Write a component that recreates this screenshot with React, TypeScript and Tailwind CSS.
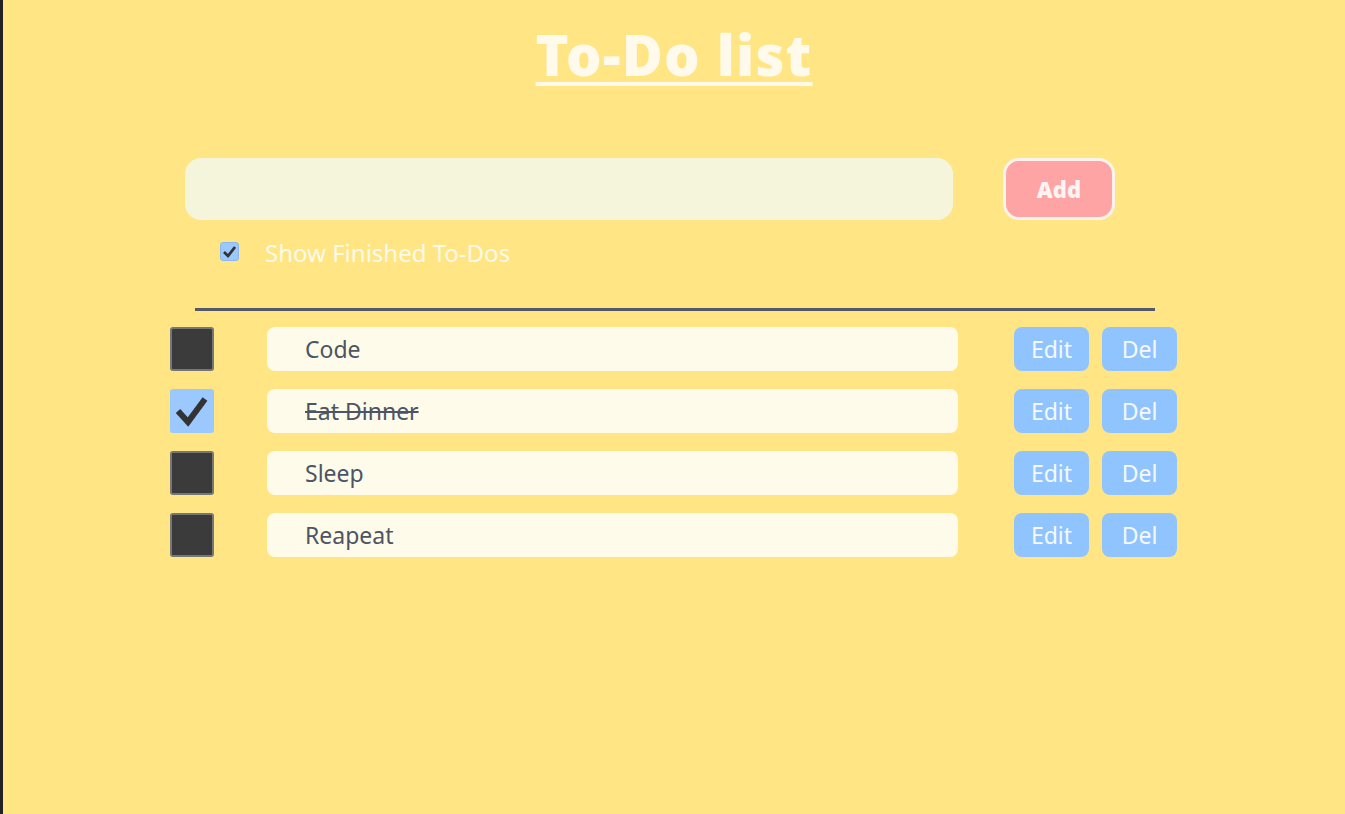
import React from "react";

const todos = [
  { text: "Code", done: false },
  { text: "Eat Dinner", done: true },
  { text: "Sleep", done: false },
  { text: "Reapeat", done: false },
];

function BigCheck({ checked }: { checked: boolean }) {
  if (!checked) {
    return <div className="w-[44px] h-[44px] shrink-0 rounded-[3px] bg-[#3b3b3b] border-2 border-[#767676]" />;
  }
  return (
    <div className="w-[44px] h-[44px] shrink-0 rounded-[3px] bg-[#9bc8ff] flex items-center justify-center">
      <svg width="44" height="44" viewBox="0 0 44 44">
        <polyline points="8,22 18,33 35,10" fill="none" stroke="#333" strokeWidth="6" strokeLinecap="butt" strokeLinejoin="miter" />
      </svg>
    </div>
  );
}

export default function App() {
  return (
    <div className="h-[814px] bg-[#ffe583] border-l-[3px] border-[#222] font-['Noto_Sans',_'Open_Sans',_sans-serif] overflow-hidden">
      <h1 className="pt-[14px] text-center">
        <span className="text-[56px] leading-[80px] font-black tracking-[1.2px] text-[#fffaeb] underline decoration-[4px] underline-offset-[6px]">
          To-Do list
        </span>
      </h1>
      <div className="mt-[64px] flex items-center pl-[182px]">
        <input className="w-[768px] h-[62px] rounded-[16px] bg-[#f5f5dc] outline-none px-4" />
        <button className="ml-[50px] w-[112px] h-[62px] rounded-[16px] bg-[#ffa4a4] border-[3px] border-[#fff3ee] text-[#fff3f3] text-[22px] font-black">
          Add
        </button>
      </div>
      <div className="mt-[22px] h-[19px] flex items-center pl-[217px]">
        <div className="w-[19px] h-[19px] rounded-[3px] bg-[#9bc8ff] border border-[#8ab8ee] flex items-center justify-center">
          <svg width="17" height="17" viewBox="0 0 17 17">
            <polyline points="3,9 7,13 14,4" fill="none" stroke="#333" strokeWidth="2.8" />
          </svg>
        </div>
        <span className="ml-[26px] text-[24px] leading-[19px] pt-[2px] text-[#fffaeb]">Show Finished To-Dos</span>
      </div>
      <div className="mt-[47px] ml-[192px] w-[960px] h-[3px] bg-[#525866]" />
      <div className="mt-[16px] flex flex-col gap-[18px] pl-[167px]">
        {todos.map((t) => (
          <div key={t.text} className="flex items-center h-[44px]">
            <BigCheck checked={t.done} />
            <div className="ml-[53px] w-[691px] h-[44px] rounded-[8px] bg-[#fffbea] flex items-center pl-[38px]">
              <span className={"text-[23px] text-[#4b5563] " + (t.done ? "line-through" : "")}>{t.text}</span>
            </div>
            <button className="ml-[56px] w-[75px] h-[44px] rounded-[8px] bg-[#90c4ff] text-[23px] text-[#f5f9ff]">Edit</button>
            <button className="ml-[13px] w-[75px] h-[44px] rounded-[8px] bg-[#90c4ff] text-[23px] text-[#f5f9ff]">Del</button>
          </div>
        ))}
      </div>
    </div>
  );
}
